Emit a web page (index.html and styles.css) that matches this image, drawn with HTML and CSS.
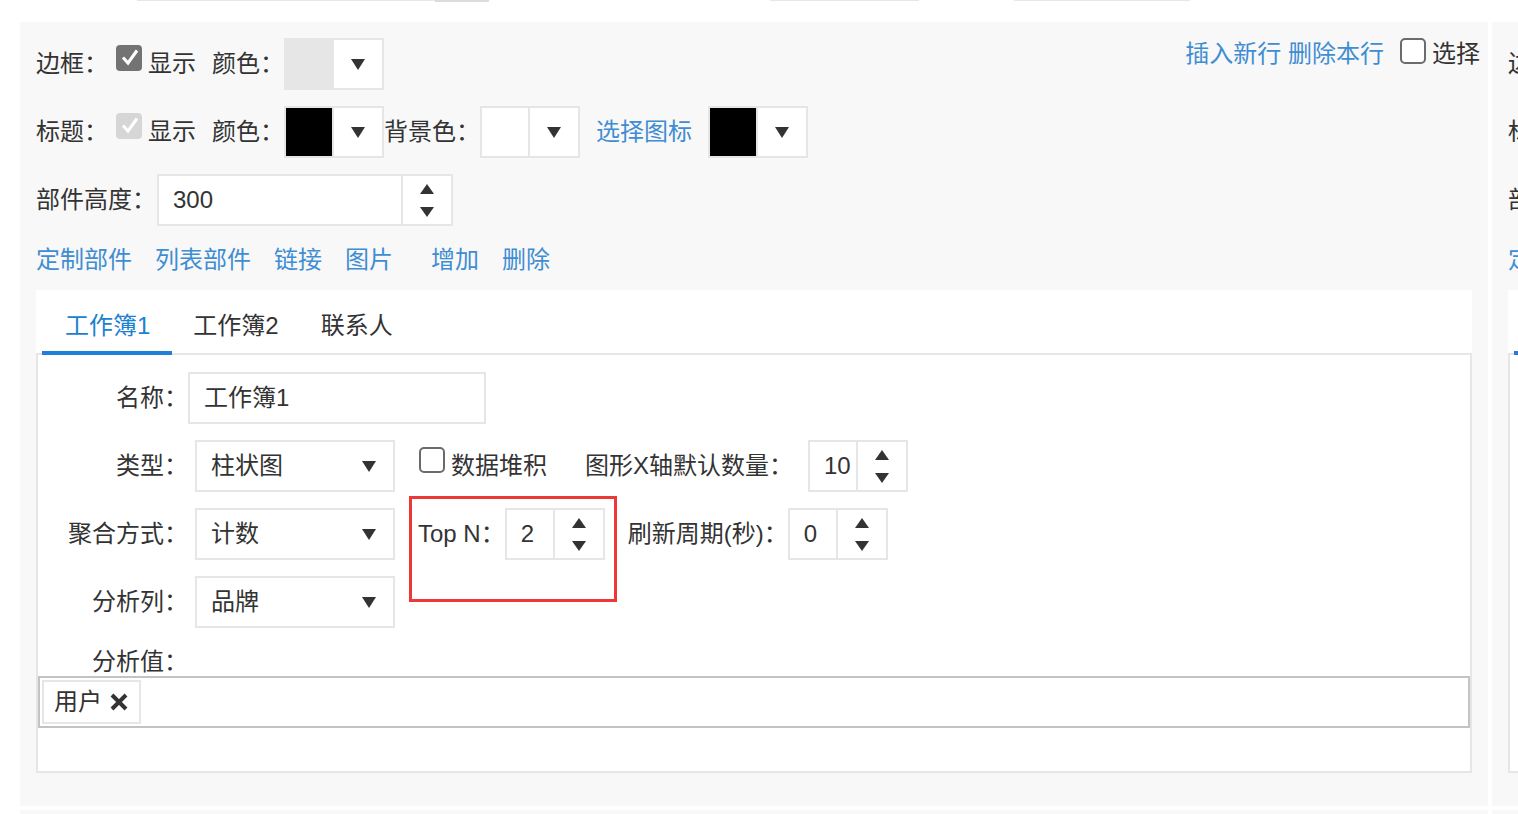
FILE: index.html
```
<!DOCTYPE html>
<html>
<head>
    <meta charset="utf-8">
    <title>部件设置</title>
    <link rel="stylesheet" href="styles.css">
</head>
<body>
    <div class="prev-row">
        <span class="prev-a"></span><span class="prev-b"></span><span class="prev-c"></span><span class="prev-d"></span>
    </div>

    <div class="board">
        <!-- panel 1 -->
        <div class="panel">
            <div class="row">
                <span>边框：</span>
                <span class="cb"><svg width="26" height="26" viewBox="0 0 26 26"><rect x="0" y="0" width="26" height="26" rx="4" fill="#737373"/><path d="M7 12.5l5 5.5 9-12.5" fill="none" stroke="#fff" stroke-width="3"/></svg></span>
                <span class="cb-text">显示</span>
                <span class="gap-l">颜色：</span>
                <span class="picker"><span class="swatch swatch-light"></span><span class="picker-btn"><i class="tri-down"></i></span></span>
                <div class="tools">
                    <a href="#">插入新行</a>&nbsp;<a href="#">删除本行</a>
                    <span class="cb cb-off"></span>
                    <span class="cb-text">选择</span>
                </div>
            </div>
            <div class="row">
                <span>标题：</span>
                <span class="cb"><svg width="26" height="26" viewBox="0 0 26 26"><rect x="0" y="0" width="26" height="26" rx="4" fill="#d6d6d6"/><path d="M7 12.5l5 5.5 9-12.5" fill="none" stroke="#fff" stroke-width="3"/></svg></span>
                <span class="cb-text">显示</span>
                <span class="gap-l">颜色：</span>
                <span class="picker"><span class="swatch swatch-black"></span><span class="picker-btn"><i class="tri-down"></i></span></span>
                <span>背景色：</span>
                <span class="picker"><span class="swatch"></span><span class="picker-btn"><i class="tri-down"></i></span></span>
                <a href="#" class="gap-l">选择图标</a>
                <span class="picker gap-l"><span class="swatch swatch-black"></span><span class="picker-btn"><i class="tri-down"></i></span></span>
            </div>
            <div class="row">
                <span>部件高度：</span>
                <span class="num num-wide"><span class="num-val">300</span><span class="spin"><i class="tri-up"></i><i class="tri-down"></i></span></span>
            </div>
            <div class="links">
                <a href="#">定制部件</a>
                <a href="#">列表部件</a>
                <a href="#">链接</a>
                <a href="#">图片</a>
                <a href="#" class="links-sep">增加</a>
                <a href="#">删除</a>
            </div>

            <div class="tabs">
                <ul class="tab-head">
                    <li class="active">工作簿1</li>
                    <li>工作簿2</li>
                    <li>联系人</li>
                </ul>
                <div class="tab-body">
                    <div class="frow">
                        <span class="flabel">名称：</span>
                        <span class="text-input">工作簿1</span>
                    </div>
                    <div class="frow">
                        <span class="flabel">类型：</span>
                        <span class="select"><span>柱状图</span><i class="tri-down"></i></span>
                        <span class="cb cb-off chk"></span>
                        <span class="cb-text">数据堆积</span>
                        <span class="xaxis">图形X轴默认数量：</span>
                        <span class="num"><span class="num-val">10</span><span class="spin"><i class="tri-up"></i><i class="tri-down"></i></span></span>
                    </div>
                    <div class="frow">
                        <span class="flabel">聚合方式：</span>
                        <span class="select"><span>计数</span><i class="tri-down"></i></span>
                        <span class="topn">
                            <span>Top N：</span>
                            <span class="num"><span class="num-val">2</span><span class="spin"><i class="tri-up"></i><i class="tri-down"></i></span></span>
                        </span>
                        <span class="refresh">刷新周期(秒)：</span>
                        <span class="num"><span class="num-val">0</span><span class="spin"><i class="tri-up"></i><i class="tri-down"></i></span></span>
                    </div>
                    <div class="frow">
                        <span class="flabel">分析列：</span>
                        <span class="select"><span>品牌</span><i class="tri-down"></i></span>
                    </div>
                    <div class="flabel value-label">分析值：</div>
                    <div class="tagbox">
                        <span class="tag">用户<svg width="20" height="20" viewBox="0 0 20 20"><path d="M3 3L17 17M17 3L3 17" stroke="#333" stroke-width="4"/></svg></span>
                    </div>
                </div>
            </div>
        </div>

        <!-- panel 2, mostly out of view -->
        <div class="panel">
            <div class="row"><span>边框：</span></div>
            <div class="row"><span>标题：</span></div>
            <div class="row"><span>部件高度：</span></div>
            <div class="links"><a href="#">定制部件</a></div>
            <div class="tabs">
                <ul class="tab-head">
                    <li class="active">工作簿1</li>
                </ul>
                <div class="tab-body tab-body-empty"></div>
            </div>
        </div>

        <div class="panel panel-next"></div>
        <div class="panel panel-next"></div>
    </div>
</body>
</html>
```

FILE: styles.css
```
* {
    box-sizing: border-box;
}
body {
    margin: 0;
    overflow: hidden;
    background: #fff;
    font-family: "Liberation Sans", "Noto Sans CJK SC", sans-serif;
    font-size: 24px;
    line-height: 32px;
    color: #333;
}
a {
    color: #3f8dd2;
    text-decoration: none;
}

/* bits of the row above, cut off by the window */
.prev-row {
    display: flex;
    align-items: flex-start;
    height: 22px;
}
.prev-row span {
    height: 1px;
    background: #e6e6e6;
}
.prev-row .prev-a {
    margin-left: 137px;
    width: 298px;
}
.prev-row .prev-b {
    width: 54px;
    height: 2px;
    background: #dcdcdc;
}
.prev-row .prev-c {
    margin-left: 281px;
    width: 149px;
}
.prev-row .prev-d {
    margin-left: 95px;
    width: 176px;
}

.board {
    display: grid;
    grid-template-columns: 1468px 1468px;
    gap: 4px;
    padding-left: 20px;
}
.panel {
    background: #f8f8f8;
    padding: 16px 16px 33px;
}
.panel-next {
    height: 784px;
}

.row {
    display: flex;
    align-items: center;
    height: 52px;
    margin-bottom: 16px;
    white-space: nowrap;
}
.gap-l {
    margin-left: 16px;
}
.tools {
    display: flex;
    align-items: center;
    align-self: flex-start;
    margin: 0 -8px 0 auto;
}
.tools .cb {
    margin: 0 0 6px 16px;
}

.cb {
    display: block;
    width: 26px;
    height: 26px;
    margin: 0 0 12px 8px;
    flex-shrink: 0;
}
.cb svg {
    display: block;
}
.cb-off {
    border: 2px solid #6b6b6b;
    border-radius: 5px;
    background: #fff;
}
.cb-text {
    margin-left: 6px;
}

.tri-down {
    display: block;
    width: 0;
    height: 0;
    border-left: 7px solid transparent;
    border-right: 7px solid transparent;
    border-top: 11px solid #333;
}
.tri-up {
    display: block;
    width: 0;
    height: 0;
    border-left: 7.5px solid transparent;
    border-right: 7.5px solid transparent;
    border-bottom: 10px solid #333;
}

.picker {
    display: flex;
    width: 100px;
    height: 52px;
    border: 2px solid #e6e6e6;
    background: #fff;
    flex-shrink: 0;
}
.swatch {
    width: 48px;
    border-right: 2px solid #e6e6e6;
    background: #fff;
}
.swatch-light {
    background: #e6e6e6;
}
.swatch-black {
    background: #000;
}
.picker-btn {
    flex: 1;
    display: flex;
    align-items: center;
    justify-content: center;
}

.num {
    display: flex;
    width: 100px;
    height: 52px;
    border: 2px solid #e6e6e6;
    background: #fff;
    flex-shrink: 0;
}
.num-wide {
    width: 296px;
    margin-left: 1px;
}
.num-val {
    flex: 1;
    padding-left: 14px;
    line-height: 48px;
    border-right: 2px solid #e6e6e6;
}
.spin {
    width: 48px;
    display: flex;
    flex-direction: column;
    align-items: center;
    justify-content: center;
    gap: 13px;
}
.spin .tri-down {
    border-left-width: 7.5px;
    border-right-width: 7.5px;
    border-top-width: 10px;
}

.links {
    display: flex;
    gap: 23px;
    height: 36px;
    align-items: center;
    margin-bottom: 12px;
}
.links .links-sep {
    margin-left: 15px;
}

.tabs {
    background: #fff;
}
.tab-head {
    display: flex;
    margin: 0;
    padding: 0 0 0 6px;
    list-style: none;
    border-bottom: 2px solid #e6e6e6;
}
.tab-head li {
    padding: 18px 22px 7px 21px;
    line-height: 36px;
    border-bottom: 4px solid transparent;
    margin-bottom: -2px;
    white-space: nowrap;
}
.tab-head li.active {
    padding: 18px 22px 7px 23px;
    color: #1c80d3;
    border-bottom-color: #1f7fdb;
}
.tab-head li:last-child {
    padding-left: 20px;
}
.tab-body {
    border: 2px solid #e6e6e6;
    border-top: none;
    padding: 17px 0 43px;
}
.tab-body-empty {
    height: 418px;
}

.frow {
    display: flex;
    align-items: center;
    height: 52px;
    margin-bottom: 16px;
    white-space: nowrap;
}
.flabel {
    width: 150px;
    flex-shrink: 0;
    text-align: right;
}
.text-input {
    width: 298px;
    height: 52px;
    border: 2px solid #e6e6e6;
    padding-left: 14px;
    line-height: 48px;
}
.select {
    display: flex;
    align-items: center;
    justify-content: space-between;
    width: 200px;
    height: 52px;
    margin-left: 7px;
    padding: 0 17px 0 14px;
    border: 2px solid #e6e6e6;
    background: #fff;
    flex-shrink: 0;
}
.chk {
    margin-left: 24px;
}
.xaxis {
    margin: 0 15px 0 38px;
}
.topn {
    position: relative;
    display: flex;
    align-items: center;
    margin-left: 23px;
}
.topn::after {
    content: "";
    position: absolute;
    top: -12px;
    left: -9px;
    right: -12px;
    bottom: -42px;
    border: 3px solid #ee3838;
}
.refresh {
    margin-left: 23px;
}

.value-label {
    height: 32px;
    padding-top: 2px;
}
.tagbox {
    display: flex;
    height: 52px;
    padding: 2px;
    border: 2px solid #c3c3c3;
}
.tag {
    display: flex;
    align-items: center;
    gap: 7px;
    height: 44px;
    padding: 0 10px;
    border: 2px solid #e6e6e6;
}
.tag svg {
    display: block;
}
```
